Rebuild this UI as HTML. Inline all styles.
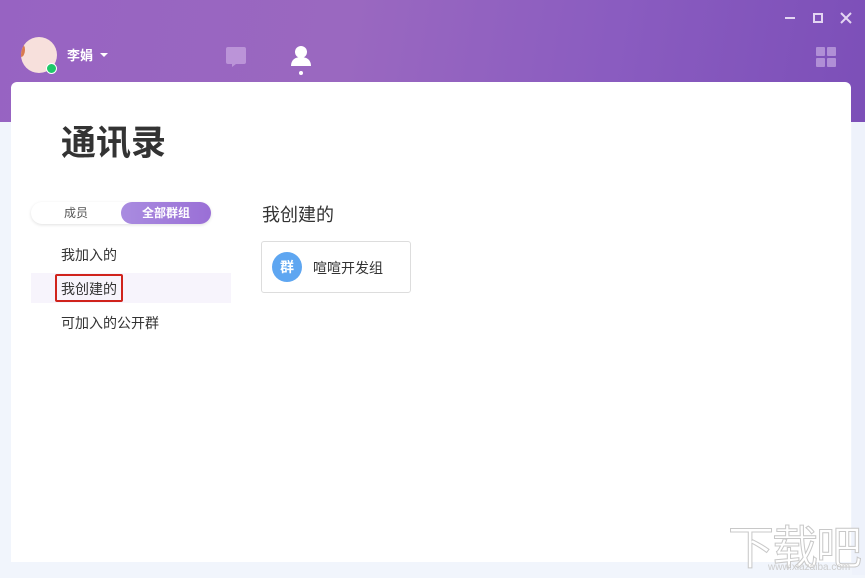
<!DOCTYPE html>
<html><head><meta charset="utf-8"><style>
*{margin:0;padding:0;box-sizing:border-box}
body{width:865px;height:575px;overflow:hidden;background:#f1f5fc;font-family:"Liberation Sans","Noto Sans CJK SC",sans-serif;position:relative}
.hdr{position:absolute;left:0;top:0;width:865px;height:122px;background:linear-gradient(100deg,#9763c2 0%,#9a68c0 40%,#8a5cc0 70%,#7c4fb8 100%)}
.card{position:absolute;left:11px;top:82px;width:840px;height:480px;background:#fff;border-radius:6px 6px 0 0}
.t{position:absolute;white-space:nowrap}
</style></head><body>
<div class="hdr"></div>
<div style="position:absolute;left:21px;top:37px;width:36px;height:36px;border-radius:50%;background:#f7e0dc;overflow:hidden"><div style="position:absolute;left:-4px;top:6px;width:8px;height:14px;background:#d87a50;border-radius:50%"></div></div>
<div style="position:absolute;left:46px;top:63px;width:11px;height:11px;border-radius:50%;background:#1fc86a;border:1.5px solid #fff"></div>
<div class="t" style="left:67px;top:45px;font-size:13px;color:#fff;font-weight:bold">李娟</div>
<div style="position:absolute;left:100px;top:53px;border-left:4px solid transparent;border-right:4px solid transparent;border-top:4px solid #fff"></div>
<svg style="position:absolute;left:226px;top:47px" width="20" height="20"><path d="M2 0h16a2 2 0 0 1 2 2v13a2 2 0 0 1-2 2H10l-4 3v-3H2a2 2 0 0 1-2-2V2a2 2 0 0 1 2-2z" fill="#bb94d8"/></svg>
<svg style="position:absolute;left:290px;top:45px" width="22" height="22"><circle cx="11" cy="7" r="6" fill="#fff"/><path d="M1 21c0-6 4-9 10-9s10 3 10 9z" fill="#fff"/></svg>
<div style="position:absolute;left:299px;top:71px;width:4px;height:4px;border-radius:50%;background:#fff"></div>
<div style="position:absolute;left:785px;top:17px;width:10px;height:2px;background:#e4d6f2"></div>
<div style="position:absolute;left:813px;top:13px;width:10px;height:10px;border:2px solid #e4d6f2"></div>
<svg style="position:absolute;left:840px;top:12px" width="12" height="12"><path d="M1 1L11 11M11 1L1 11" stroke="#e4d6f2" stroke-width="2"/></svg>
<div style="position:absolute;left:816px;top:47px;width:9px;height:9px;background:#b08fd6;border-radius:1px"></div>
<div style="position:absolute;left:827px;top:47px;width:9px;height:9px;background:#b08fd6;border-radius:1px"></div>
<div style="position:absolute;left:816px;top:58px;width:9px;height:9px;background:#b08fd6;border-radius:1px"></div>
<div style="position:absolute;left:827px;top:58px;width:9px;height:9px;background:#b08fd6;border-radius:1px"></div>
<div class="card"></div>
<div class="t" style="left:61px;top:115px;font-size:35px;font-weight:bold;color:#333">通讯录</div>
<div style="position:absolute;left:31px;top:202px;width:180px;height:22px;border-radius:11px;background:#fff;box-shadow:0 1px 3px rgba(0,0,0,.12)"></div>
<div class="t" style="left:64px;top:204px;font-size:12px;color:#555">成员</div>
<div style="position:absolute;left:121px;top:202px;width:90px;height:22px;border-radius:11px;background:linear-gradient(90deg,#a98ce0,#9a6fd6)"></div>
<div class="t" style="left:142px;top:204px;font-size:12px;color:#fff;font-weight:bold">全部群组</div>
<div class="t" style="left:61px;top:245px;font-size:14px;color:#333">我加入的</div>
<div style="position:absolute;left:31px;top:273px;width:200px;height:30px;background:#f7f4fc"></div>
<div style="position:absolute;left:55px;top:274px;width:68px;height:28px;border:2px solid #d0231c;border-radius:2px"></div>
<div class="t" style="left:61px;top:279px;font-size:14px;color:#333">我创建的</div>
<div class="t" style="left:61px;top:313px;font-size:14px;color:#333">可加入的公开群</div>
<div class="t" style="left:262px;top:201px;font-size:18px;color:#333">我创建的</div>
<div style="position:absolute;left:261px;top:241px;width:150px;height:52px;border:1px solid #ddd;border-radius:3px;background:#fff"></div>
<div style="position:absolute;left:272px;top:252px;width:30px;height:30px;border-radius:50%;background:#5ea6f1;color:#fff;font-size:14px;font-weight:bold;text-align:center;line-height:30px">群</div>
<div class="t" style="left:313px;top:258px;font-size:14px;color:#333">喧喧开发组</div>
<div style="position:absolute;left:852px;top:122px;width:13px;height:453px;background:#eef2fb"></div>
<div class="t" style="left:728px;top:512px;font-size:46px;color:#fff;-webkit-text-stroke:1px #c8c8c8;letter-spacing:-2px">下载吧</div>
<div class="t" style="left:768px;top:562px;font-size:10px;color:#ccc">www.xiazaiba.com</div>
</body></html>
